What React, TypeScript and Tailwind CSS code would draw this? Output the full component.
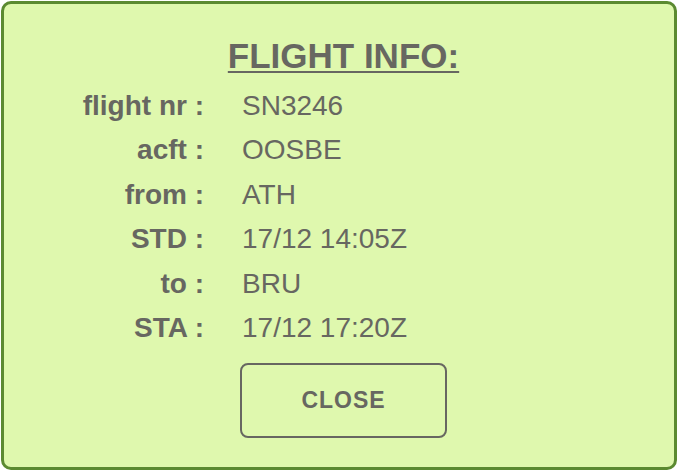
const flight = [
  { label: "flight nr :", value: "SN3246" },
  { label: "acft :", value: "OOSBE" },
  { label: "from :", value: "ATH" },
  { label: "STD :", value: "17/12 14:05Z" },
  { label: "to :", value: "BRU" },
  { label: "STA :", value: "17/12 17:20Z" },
];

export default function App() {
  return (
    <div className="w-[678px] h-[471px] bg-white p-[1px] font-['Liberation_Sans',Arial,sans-serif] text-[#676761]">
      <div className="h-full flex flex-col items-center border-[3px] border-[#5b8a31] rounded-[10px] bg-[#dff8ae] pt-[32px] pl-[9px]">
        <h2 className="text-[35px] leading-[40px] font-bold underline decoration-2 underline-offset-[3px]">
          FLIGHT INFO:
        </h2>
        <div className="w-full grid grid-cols-[191px_1fr] gap-x-[38px] mt-[7.5px] text-[28px] leading-[44.6px]">
          {flight.map((row) => (
            <div key={row.label} className="contents">
              <span className="text-right font-bold">{row.label}</span>
              <span>{row.value}</span>
            </div>
          ))}
        </div>
        <button className="mt-[12px] w-[207px] h-[75px] border-2 border-[#676761] rounded-[8px] text-[23px] font-bold tracking-[1px]">
          CLOSE
        </button>
      </div>
    </div>
  );
}
